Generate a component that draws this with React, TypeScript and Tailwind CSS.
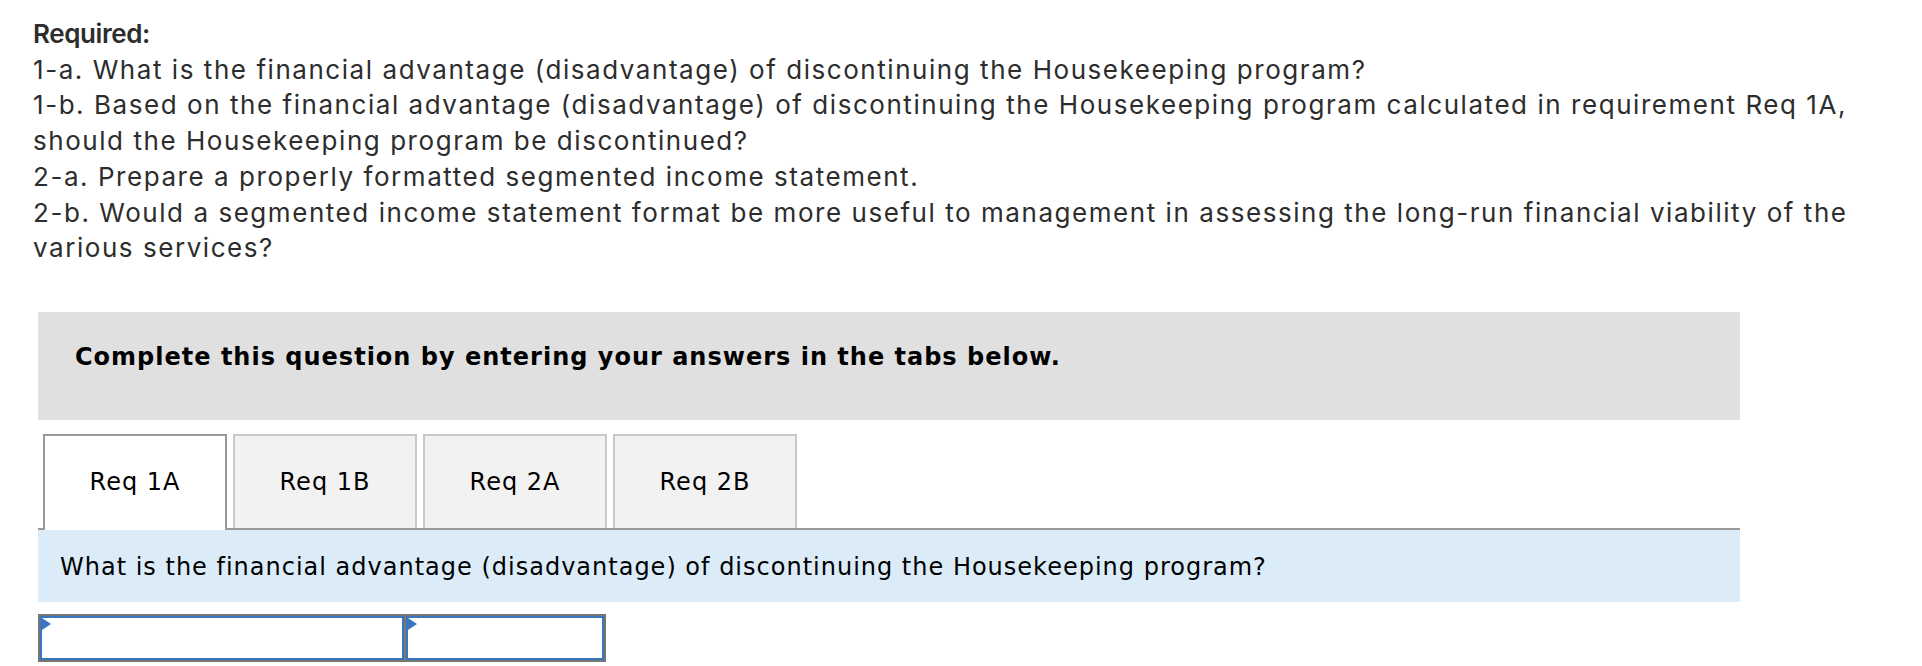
const tabs = ['Req 1A', 'Req 1B', 'Req 2A', 'Req 2B'];

function AnswerCell({ width }: { width: string }) {
  return (
    <div className={`relative h-[44px] border-2 border-[#3a76bd] bg-white ${width}`}>
      <span className="absolute left-0 top-0 h-0 w-0 border-y-[6px] border-l-[9px] border-y-transparent border-l-[#3a76bd]" />
    </div>
  );
}

export default function App() {
  return (
    <div className="min-h-screen bg-white pt-[16px] text-black">
      <div className="w-[1892px] pl-[33px] text-[26px] leading-[35.7px] tracking-[1.55px] text-[#2d2d2d] font-['Inter',_'Lato',_sans-serif]">
        <div className="font-semibold tracking-[-0.4px]">Required:</div>
        <div>1-a. What is the financial advantage (disadvantage) of discontinuing the Housekeeping program?</div>
        <div>
          1-b. Based on the financial advantage (disadvantage) of discontinuing the Housekeeping program calculated in requirement Req 1A, should the Housekeeping program be discontinued?
        </div>
        <div>2-a. Prepare a properly formatted segmented income statement.</div>
        <div>
          2-b. Would a segmented income statement format be more useful to management in assessing the long-run financial viability of the various services?
        </div>
      </div>

      <div className="ml-[38px] w-[1702px] tracking-[1px] font-['DejaVu_Sans',_Verdana,_sans-serif]">
        <div className="mt-[46px] h-[108px] bg-[#e0e0e0] pl-[37px] pt-[31px] text-[24px] font-bold leading-[28px]">
          Complete this question by entering your answers in the tabs below.
        </div>

        <div className="relative z-10 mt-[14px] mb-[-2px] flex h-[96px] items-start gap-[6px] pl-[5px]">
          {tabs.map((tab, i) =>
            i === 0 ? (
              <div
                key={tab}
                className="flex h-[96px] w-[184px] items-center justify-center border-x-2 border-t-2 border-[#999999] bg-white pb-[2px] text-[24px]"
              >
                {tab}
              </div>
            ) : (
              <div
                key={tab}
                className="flex h-[94px] w-[184px] items-center justify-center border-x-2 border-t-2 border-[#c8c8c8] bg-[#f2f2f2] text-[24px]"
              >
                {tab}
              </div>
            )
          )}
        </div>

        <div className="h-[74px] border-t-2 border-[#999999] bg-[#dbecf8] pl-[22px] pt-[23px] text-[24px] leading-[28px]">
          What is the financial advantage (disadvantage) of discontinuing the Housekeeping program?
        </div>

        <div className="mt-[12px] flex w-[568px] gap-[2px] border-2 border-[#767676] bg-[#767676]">
          <AnswerCell width="w-[364px]" />
          <AnswerCell width="w-[198px]" />
        </div>
      </div>
    </div>
  );
}
